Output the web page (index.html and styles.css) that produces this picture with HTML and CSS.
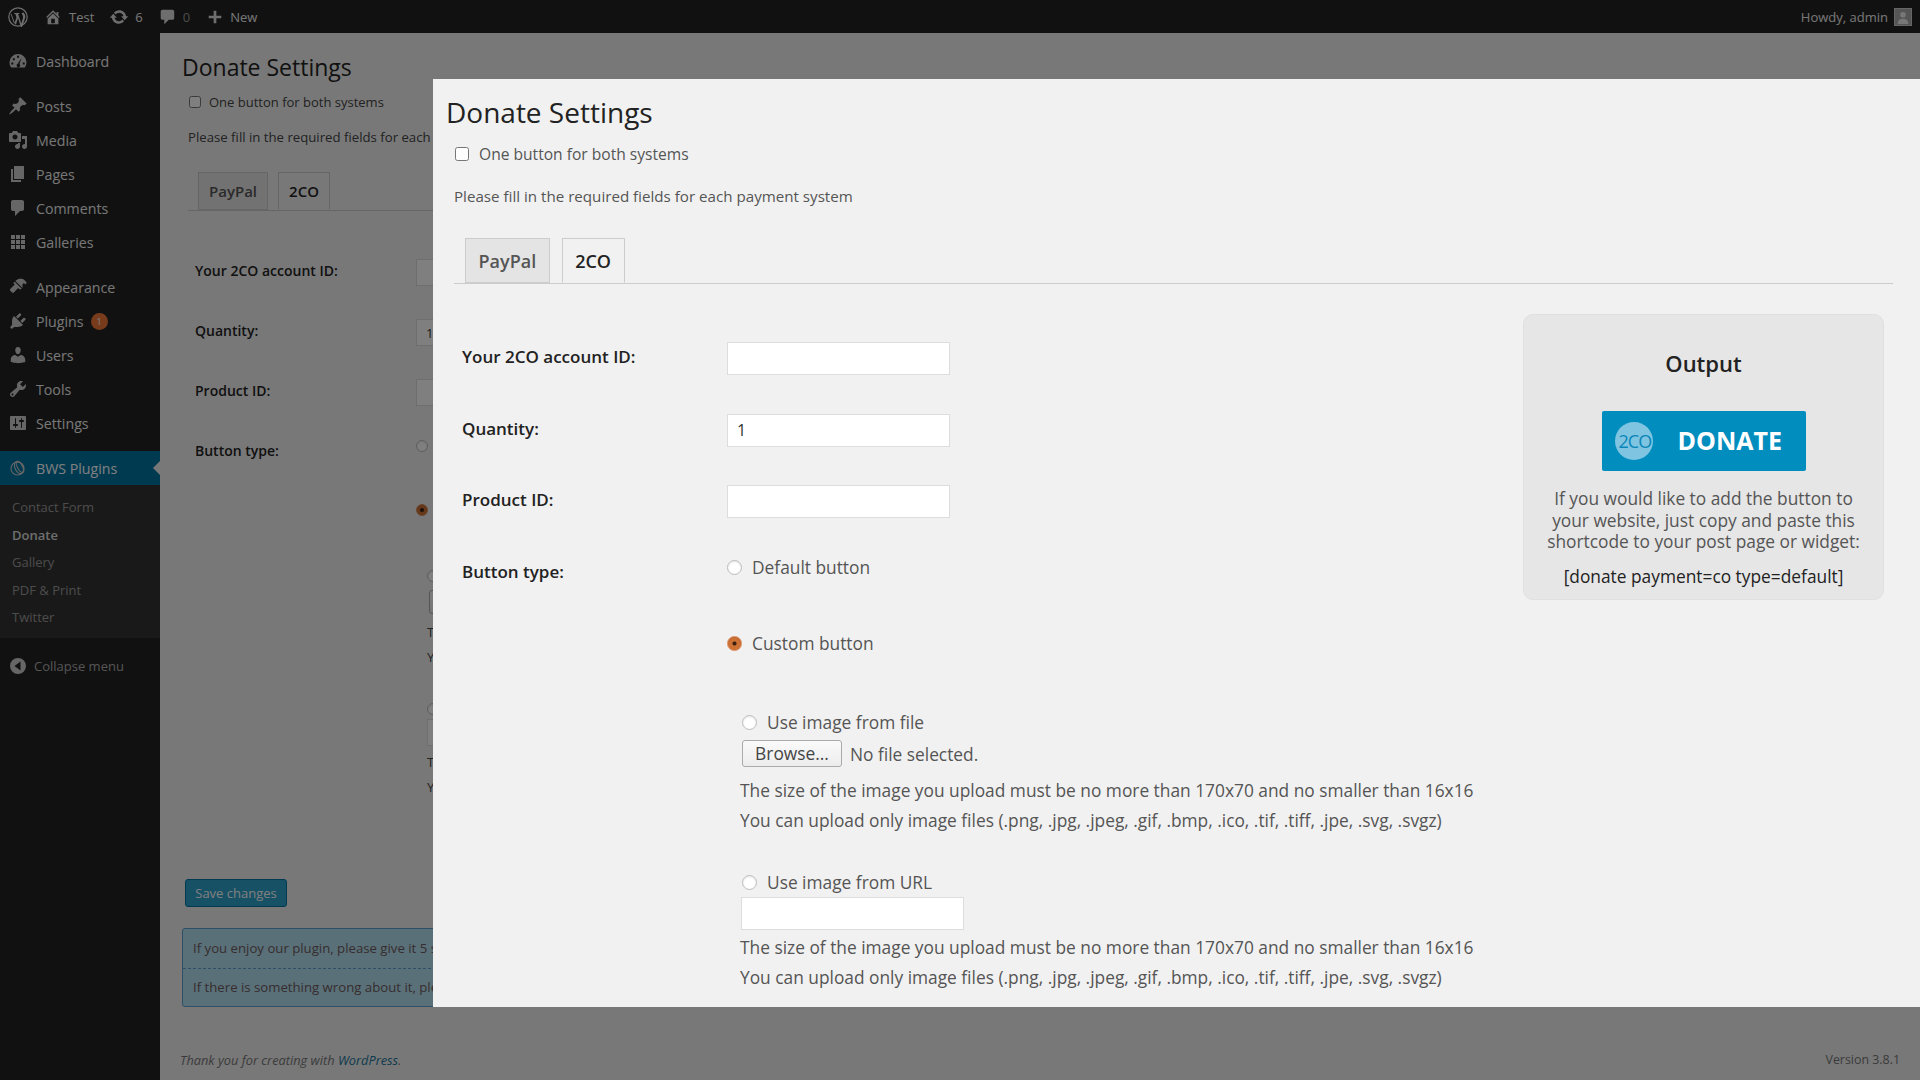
FILE: index.html
```html
<!DOCTYPE html>
<html>
<head>
    <meta charset="utf-8">
    <title>Donate Settings</title>
    <link rel="stylesheet" href="styles.css">
</head>
<body>
    <!-- Admin bar -->
    <div class="adminbar">
        <div class="bar-left">
            <svg class="bar-logo" viewBox="0 0 20 20"><circle cx="10" cy="10" r="9.2" fill="none"/><path d="M2.6 7l3.6 10 2.3-6.6L7.4 7H6.3V6h5v1h-1.2l3.2 9.6 1.6-5.4c.5-1.8-.2-3.1-1-4.2h-.4a2 2 0 0 1 2-1.6c1.2 1.2 2 3 1.8 4.5-.1 1-2.8 9.1-3.6 10.7h-.6L10 10.9 8 17.6h-.6L3.5 7H2.6z"/></svg>
            <span class="bar-item bar-site">
                <svg class="bar-icon" viewBox="0 0 20 20"><path d="M16 8.5l1.53 1.53-1.06 1.06L10 4.62l-6.47 6.47-1.06-1.06L10 2.5l4 4v-2h2v4zm-6-2.46l6 5.99V18H4v-5.97zM12 17v-5H8v5h4z"/></svg>
                Test
            </span>
            <span class="bar-item bar-updates">
                <svg class="bar-icon bar-icon-wide" viewBox="0 0 20 20"><path d="M10.2 3.28c3.53 0 6.43 2.61 6.92 6h2.08l-3.5 4-3.5-4h2.32c-.45-1.97-2.21-3.44-4.32-3.44-1.45 0-2.73.71-3.54 1.78L4.95 5.66C6.23 4.2 8.11 3.28 10.2 3.28zm-.4 13.44c-3.52 0-6.43-2.61-6.92-6H.8l3.5-4c1.17 1.33 2.33 2.67 3.5 4H5.48c.45 1.97 2.21 3.44 4.32 3.44 1.45 0 2.73-.71 3.54-1.78l1.71 1.95c-1.28 1.46-3.15 2.39-5.25 2.39z"/></svg>
                6
            </span>
            <span class="bar-item bar-comments">
                <svg class="bar-icon" viewBox="0 0 20 20"><path d="M5 2h11c1.1 0 2 .9 2 2v7c0 1.1-.9 2-2 2h-4l-5 5v-5H5c-1.1 0-2-.9-2-2V4c0-1.1.9-2 2-2z"/></svg>
                <span class="bar-zero">0</span>
            </span>
            <span class="bar-item bar-new">
                <svg class="bar-icon" viewBox="0 0 20 20"><path d="M8.5 3h3v5.5H17v3h-5.5V17h-3v-5.5H3v-3h5.5z"/></svg>
                New
            </span>
        </div>
        <div class="bar-right">
            <span>Howdy, admin</span>
            <span class="avatar">
                <svg viewBox="0 0 18 18"><circle cx="9" cy="6.5" r="3.2"/><path d="M3 17c0-4 2-6 6-6s6 2 6 6z"/></svg>
            </span>
        </div>
    </div>

    <div class="wrap">
        <!-- Sidebar -->
        <div class="sidebar">
            <ul class="menu">
                <li>
                    <svg class="menu-icon" viewBox="0 0 20 20"><path d="M10 3a8.5 8.5 0 0 0-8.5 8.5c0 1.9.6 3.6 1.7 5h13.6a8.5 8.5 0 0 0 1.7-5A8.5 8.5 0 0 0 10 3zM9 4.8h2v2H9zM4.8 7.3h2v2h-2zM3.3 11.5h2v2h-2zM14.7 11.5h2v2h-2zM13.5 7l-2 6a1.8 1.8 0 1 1-1.8-.2z" fill-rule="evenodd"/></svg>
                    Dashboard
                </li>
                <li class="first">
                    <svg class="menu-icon" viewBox="0 0 20 20"><path d="M10.44 3.02l1.82-1.82 6.36 6.35-1.83 1.82c-1.05-.68-2.48-.57-3.41.36l-.75.75c-.92.93-1.04 2.35-.35 3.41l-1.83 1.82-2.41-2.41-2.8 2.79c-.42.42-3.38 2.71-3.8 2.29s1.86-3.39 2.28-3.81l2.79-2.79L4.1 9.36l1.83-1.82c1.05.69 2.48.57 3.4-.36l.75-.75c.93-.92 1.05-2.35.36-3.41z"/></svg>
                    Posts
                </li>
                <li>
                    <svg class="menu-icon" viewBox="0 0 20 20"><path d="M13 11V4c0-.55-.45-1-1-1h-1.67L9 1H5L3.67 3H2c-.55 0-1 .45-1 1v7c0 .55.45 1 1 1h10c.55 0 1-.45 1-1zM7 4.5c1.38 0 2.5 1.12 2.5 2.5S8.38 9.5 7 9.5 4.5 8.38 4.5 7 5.62 4.5 7 4.5zM14 6h5v10.5c0 1.38-1.12 2.5-2.5 2.5S14 17.88 14 16.5s1.12-2.5 2.5-2.5c.17 0 .34.02.5.05V9h-3V6zm-4 8.05V13h2v3.5c0 1.38-1.12 2.5-2.5 2.5S7 17.88 7 16.5 8.12 14 9.5 14c.17 0 .34.02.5.05z"/></svg>
                    Media
                </li>
                <li>
                    <svg class="menu-icon" viewBox="0 0 20 20"><path d="M6 15V2h10v13H6zm-1 1h8v2H3V5h2v11z"/></svg>
                    Pages
                </li>
                <li>
                    <svg class="menu-icon" viewBox="0 0 20 20"><path d="M5 2h9c1.1 0 2 .9 2 2v7c0 1.1-.9 2-2 2h-2l-5 5v-5H5c-1.1 0-2-.9-2-2V4c0-1.1.9-2 2-2z"/></svg>
                    Comments
                </li>
                <li>
                    <svg class="menu-icon" viewBox="0 0 20 20"><path d="M3 3h4v4H3zM8 3h4v4H8zM13 3h4v4h-4zM3 8h4v4H3zM8 8h4v4H8zM13 8h4v4h-4zM3 13h4v4H3zM8 13h4v4H8zM13 13h4v4h-4z"/></svg>
                    Galleries
                </li>
                <li class="first">
                    <svg class="menu-icon" viewBox="0 0 20 20"><path d="M14.48 11.06L7.41 3.97s.7-.7 2.12-1.41c1.42-.7 2.83-.7 4.24-.7 1.42 0 2.83 1.4 2.83 1.4l2.12 2.12c-.71 1.42-1.42 2.13-1.42 2.13l-1.41-1.42-1.41 1.42zM13.77 11.77L6.7 4.7 5.28 6.12 6.7 7.53l-4.24 4.24c-.7.71-.7 1.42 0 2.12l1.4 1.4c.7.7 1.41.7 2.12 0l4.24-4.24 1.41 1.41z"/></svg>
                    Appearance
                </li>
                <li>
                    <svg class="menu-icon" viewBox="0 0 20 20"><path d="M13.11 4.36L9.87 7.6 8 5.73l3.24-3.24c.35-.34 1.05-.2 1.56.32.52.51.66 1.21.31 1.55zm-8 1.77l.91-1.12 9.01 9.01-1.19.84c-.71.71-2.63 1.16-3.82 1.16H6.14L4.9 17.26c-.59.59-1.54.59-2.12 0-.59-.58-.59-1.53 0-2.12l1.24-1.24v-3.88c0-1.13.4-3.05 1.09-3.89zm7.26 3.97l3.24-3.24c.34-.35 1.04-.21 1.55.31.52.51.66 1.21.31 1.55l-3.24 3.25z"/></svg>
                    Plugins
                    <span class="badge">1</span>
                </li>
                <li>
                    <svg class="menu-icon" viewBox="0 0 20 20"><path d="M10 9.25c-2.27 0-2.73-3.44-2.73-3.44C7 4.02 7.82 2 9.97 2c2.16 0 2.98 2.02 2.71 3.81 0 0-.41 3.44-2.68 3.44zm0 2.57L12.72 10c2.39 0 4.52 2.33 4.52 4.53v2.49s-3.65 1.13-7.24 1.13c-3.65 0-7.24-1.13-7.24-1.13v-2.49c0-2.25 1.94-4.48 4.47-4.48z"/></svg>
                    Users
                </li>
                <li>
                    <svg class="menu-icon" viewBox="0 0 20 20"><path d="M16.68 9.77c-1.34 1.34-3.3 1.67-4.95.99l-5.41 6.52c-.99.99-2.59.99-3.57 0-.99-.98-.99-2.58 0-3.57l6.52-5.42c-.68-1.65-.35-3.61.99-4.95 1.28-1.28 3.12-1.62 4.72-1.06l-2.89 2.89 2.82 2.82 2.86-2.87c.53 1.58.18 3.4-1.09 4.65zM3.81 16.21c.4.39 1.04.39 1.43 0 .4-.4.4-1.04 0-1.43-.39-.4-1.03-.4-1.43 0-.39.39-.39 1.03 0 1.43z"/></svg>
                    Tools
                </li>
                <li>
                    <svg class="menu-icon" viewBox="0 0 20 20"><path d="M18 16V4c0-.55-.45-1-1-1H3c-.55 0-1 .45-1 1v12c0 .55.45 1 1 1h14c.55 0 1-.45 1-1zM8 11h1c.55 0 1 .45 1 1s-.45 1-1 1H8v1.5c0 .28-.22.5-.5.5s-.5-.22-.5-.5V13H6c-.55 0-1-.45-1-1s.45-1 1-1h1V5.5c0-.28.22-.5.5-.5s.5.22.5.5V11zm5-2h-1c-.55 0-1-.45-1-1s.45-1 1-1h1V5.5c0-.28.22-.5.5-.5s.5.22.5.5V7h1c.55 0 1 .45 1 1s-.45 1-1 1h-1v5.5c0 .28-.22.5-.5.5s-.5-.22-.5-.5V9z"/></svg>
                    Settings
                </li>
                <li class="first current">
                    <svg class="menu-icon menu-icon-line" viewBox="0 0 20 20"><circle cx="9.5" cy="10.5" r="6.5"/><ellipse cx="11" cy="9.5" rx="4" ry="6.5" transform="rotate(-25 11 9.5)"/><ellipse cx="12" cy="9" rx="2.5" ry="6" transform="rotate(-30 12 9)"/></svg>
                    BWS Plugins
                </li>
            </ul>
            <ul class="submenu">
                <li>Contact Form</li>
                <li class="sub-current">Donate</li>
                <li>Gallery</li>
                <li>PDF &amp; Print</li>
                <li>Twitter</li>
            </ul>
            <div class="collapse">
                <svg class="menu-icon" viewBox="0 0 20 20"><path d="M10 2a8 8 0 1 1 0 16 8 8 0 0 1 0-16zM12.5 5.5L6.5 10l6 4.5z" fill-rule="evenodd"/></svg>
                Collapse menu
            </div>
        </div>

        <!-- Page behind the popup -->
        <div class="content">
            <div class="settings settings-page">
                <h2>Donate Settings</h2>
                <label class="check-line"><input type="checkbox"> One button for both systems</label>
                <p class="intro">Please fill in the required fields for each payment system</p>
                <div class="tabs">
                    <span class="tab">PayPal</span>
                    <span class="tab tab-active">2CO</span>
                </div>
                <div class="columns">
                    <div class="fields">
                        <div class="row">
                            <div class="row-label">Your 2CO account ID:</div>
                            <input class="text-input" type="text">
                        </div>
                        <div class="row">
                            <div class="row-label">Quantity:</div>
                            <input class="text-input" type="text" value="1">
                        </div>
                        <div class="row">
                            <div class="row-label">Product ID:</div>
                            <input class="text-input" type="text">
                        </div>
                        <div class="row row-type">
                            <div class="row-label">Button type:</div>
                            <div class="type-options">
                                <label class="radio-line"><input type="radio" name="bg-type"> Default button</label>
                                <label class="radio-line radio-custom"><input type="radio" name="bg-type" checked> Custom button</label>
                                <div class="custom-block">
                                    <label class="radio-line"><input type="radio" name="bg-src"> Use image from file</label>
                                    <div class="file-line"><span class="browse">Browse...</span> No file selected.</div>
                                    <p class="hint">The size of the image you upload must be no more than 170x70 and no smaller than 16x16</p>
                                    <p class="hint">You can upload only image files (.png, .jpg, .jpeg, .gif, .bmp, .ico, .tif, .tiff, .jpe, .svg, .svgz)</p>
                                    <label class="radio-line radio-url"><input type="radio" name="bg-src"> Use image from URL</label>
                                    <input class="text-input url-input" type="text">
                                    <p class="hint">The size of the image you upload must be no more than 170x70 and no smaller than 16x16</p>
                                    <p class="hint">You can upload only image files (.png, .jpg, .jpeg, .gif, .bmp, .ico, .tif, .tiff, .jpe, .svg, .svgz)</p>
                                </div>
                            </div>
                        </div>
                    </div>
                </div>
                <button class="save">Save changes</button>
                <div class="notice">
                    <div class="notice-row">If you enjoy our plugin, please give it 5 stars on WordPress</div>
                    <div class="notice-row">If there is something wrong about it, please contact us</div>
                </div>
            </div>
            <div class="footer">
                <span class="thanks">Thank you for creating with <a href="#">WordPress</a>.</span>
                <span class="version">Version 3.8.1</span>
            </div>
        </div>
    </div>

    <div class="overlay"></div>

    <!-- Popup -->
    <div class="modal">
        <div class="settings settings-modal">
            <h2>Donate Settings</h2>
            <label class="check-line"><input type="checkbox"> One button for both systems</label>
            <p class="intro">Please fill in the required fields for each payment system</p>
            <div class="tabs">
                <span class="tab">PayPal</span>
                <span class="tab tab-active">2CO</span>
            </div>
            <div class="columns">
                <div class="fields">
                    <div class="row">
                        <div class="row-label">Your 2CO account ID:</div>
                        <input class="text-input" type="text">
                    </div>
                    <div class="row">
                        <div class="row-label">Quantity:</div>
                        <input class="text-input" type="text" value="1">
                    </div>
                    <div class="row">
                        <div class="row-label">Product ID:</div>
                        <input class="text-input" type="text">
                    </div>
                    <div class="row row-type">
                        <div class="row-label">Button type:</div>
                        <div class="type-options">
                            <label class="radio-line"><input type="radio" name="type"> Default button</label>
                            <label class="radio-line radio-custom"><input type="radio" name="type" checked> Custom button</label>
                            <div class="custom-block">
                                <label class="radio-line"><input type="radio" name="src"> Use image from file</label>
                                <div class="file-line"><span class="browse">Browse...</span> No file selected.</div>
                                <p class="hint">The size of the image you upload must be no more than 170x70 and no smaller than 16x16</p>
                                <p class="hint">You can upload only image files (.png, .jpg, .jpeg, .gif, .bmp, .ico, .tif, .tiff, .jpe, .svg, .svgz)</p>
                                <label class="radio-line radio-url"><input type="radio" name="src"> Use image from URL</label>
                                <input class="text-input url-input" type="text">
                                <p class="hint">The size of the image you upload must be no more than 170x70 and no smaller than 16x16</p>
                                <p class="hint">You can upload only image files (.png, .jpg, .jpeg, .gif, .bmp, .ico, .tif, .tiff, .jpe, .svg, .svgz)</p>
                            </div>
                        </div>
                    </div>
                </div>
                <div class="output">
                    <h3>Output</h3>
                    <div class="donate-btn">
                        <span class="donate-logo">2CO</span>
                        <span class="donate-word">DONATE</span>
                    </div>
                    <p>If you would like to add the button to your website, just copy and paste this shortcode to your post page or widget:</p>
                    <div class="shortcode">[donate payment=co type=default]</div>
                </div>
            </div>
        </div>
    </div>
</body>
</html>
```

FILE: styles.css
```css
* {
    box-sizing: border-box;
}

html, body {
    margin: 0;
    height: 1080px;
    overflow: hidden;
}

body {
    position: relative;
    background: #f1f1f1;
    font-family: "Open Sans", sans-serif;
    font-size: 13px;
    color: #444;
}

ul {
    list-style: none;
    margin: 0;
    padding: 0;
}

/* Admin bar */
.adminbar {
    height: 33px;
    background: #222;
    color: #eee;
    display: flex;
    justify-content: space-between;
    align-items: center;
    padding: 0 8px;
}

.bar-left, .bar-right, .bar-item {
    display: flex;
    align-items: center;
}

.bar-logo {
    width: 20px;
    height: 20px;
    fill: #ddd;
    stroke: none;
}

.bar-logo circle {
    stroke: #ddd;
    stroke-width: 1.2;
}

.bar-icon {
    width: 18px;
    height: 18px;
    fill: #ddd;
    margin-right: 7px;
}

.bar-site {
    margin-left: 16px;
}

.bar-updates {
    margin-left: 15px;
}

.bar-icon-wide {
    width: 20px;
    height: 20px;
    margin-right: 6px;
}

.bar-comments {
    margin-left: 15px;
}

.bar-zero {
    color: #999;
}

.bar-new {
    margin-left: 16px;
}

.bar-new .bar-icon {
    margin-right: 6px;
}

.bar-right {
    gap: 6px;
}

.avatar {
    display: block;
    width: 18px;
    height: 18px;
    background: #aaa;
    border: 1px solid #ccc;
}

.avatar svg {
    display: block;
    width: 100%;
    height: 100%;
    fill: #eee;
}

/* Layout */
.wrap {
    display: flex;
    height: 1047px;
}

.sidebar {
    width: 160px;
    flex-shrink: 0;
    background: #222;
    color: #eee;
    padding-top: 11px;
}

.content {
    flex: 1;
    position: relative;
}

/* Sidebar menu */
.menu li {
    height: 34px;
    display: flex;
    align-items: center;
    padding-left: 8px;
    font-size: 14.2px;
    position: relative;
}

.menu li.first {
    margin-top: 11px;
}

.menu-icon {
    width: 20px;
    height: 20px;
    fill: #ccc;
    margin-right: 8px;
    flex-shrink: 0;
}

.menu-icon-line {
    fill: none;
    stroke: #ccc;
    stroke-width: 1.1;
}

.badge {
    width: 17px;
    height: 17px;
    border-radius: 50%;
    background: #f0783a;
    color: #fff;
    font-size: 9px;
    line-height: 17px;
    text-align: center;
    margin-left: 7px;
}

.menu li.current {
    background: #0074a2;
    color: #fff;
}

.menu li.current::after {
    content: "";
    position: absolute;
    right: 0;
    top: 10px;
    border: 7px solid transparent;
    border-left-width: 0;
    border-right-color: #f1f1f1;
}

.submenu {
    background: #333;
    padding: 9px 0 6px 12px;
    color: #999;
}

.submenu li {
    height: 27.5px;
    line-height: 27.5px;
}

.submenu .sub-current {
    color: #ddd;
    font-weight: 600;
}

.collapse {
    display: flex;
    align-items: center;
    padding: 18px 0 0 8px;
    color: #aaa;
}

.collapse .menu-icon {
    margin-right: 6px;
}

/* Settings form, page version */
.settings h2 {
    font-weight: 400;
    color: #222;
}

.settings label {
    display: flex;
    align-items: center;
}

.settings p {
    margin: 0;
}

.settings-page {
    padding: 18px 0 0 22px;
    height: 990px;
}

.settings-page h2 {
    font-size: 23px;
    line-height: 32px;
    margin: 0;
}

.settings-page .check-line {
    margin: 9px 0 0 7px;
    height: 20px;
}

.settings-page .check-line input {
    width: 12px;
    height: 12px;
    margin: 0 8px 0 0;
}

.settings-page .intro {
    margin: 15px 0 0 6px;
    line-height: 20px;
    font-size: 13.2px;
}

.settings-page .tabs {
    margin: 26px 0 0 6px;
    padding-left: 10px;
    height: 38px;
}

.settings-page .tab {
    font-size: 15px;
    padding: 0 10px;
    height: 38px;
    line-height: 36px;
    margin-right: 10px;
}

.settings-page .fields {
    padding: 48px 0 0 13px;
}

.settings-page .row {
    height: 60px;
}

.settings-page .row-label {
    width: 221px;
    flex-shrink: 0;
    font-size: 14px;
    padding-top: 2px;
}

.settings-page .text-input {
    width: 186px;
    height: 27px;
    font-size: 13px;
    flex-shrink: 0;
}

.settings-page .row-type {
    height: 440px;
}

.settings-page .type-options {
    margin-top: -3px;
}

.settings-page .radio-line {
    height: 20px;
}

.settings-page .radio-line input {
    width: 12px;
    height: 12px;
    margin-right: 8px;
}

.settings-page .radio-custom {
    margin-top: 44px;
}

.settings-page .custom-block {
    padding: 46px 0 0 11px;
}

.settings-page .file-line {
    margin-top: 4px;
    height: 24px;
}

.settings-page .browse {
    font-size: 13px;
    padding: 2px 8px;
    margin: 0 8px 0 2px;
}

.settings-page .hint {
    line-height: 25px;
}

.settings-page .file-line + .hint {
    margin-top: 6px;
}

.settings-page .radio-url {
    margin-top: 29px;
}

.settings-page .url-input {
    margin-bottom: 4px;
}

.save {
    position: absolute;
    left: 25px;
    top: 846px;
    width: 102px;
    height: 28px;
    background: #2ea2cc;
    border: 1px solid #0074a2;
    border-radius: 3px;
    color: #fff;
    font-family: inherit;
    font-size: 13px;
    padding: 0;
}

.notice {
    position: absolute;
    left: 22px;
    top: 895px;
    width: 700px;
    background: #b4e0f0;
    border: 1px solid #5a9fd0;
    border-radius: 3px;
    color: #6e5a5e;
    font-size: 13.2px;
}

.notice-row {
    height: 39px;
    line-height: 38px;
    padding-left: 10px;
}

.notice-row + .notice-row {
    height: 38px;
    line-height: 37px;
    border-top: 1px dashed #5a9fd0;
}

.footer {
    position: absolute;
    left: 0;
    right: 0;
    top: 1018px;
    display: flex;
    justify-content: space-between;
    padding: 0 20px;
    font-size: 12.8px;
    color: #777;
}

.thanks {
    font-style: italic;
}

.version {
    font-size: 12.4px;
}

.footer a {
    color: #21759b;
    text-decoration: none;
}

/* Overlay and popup */
.overlay {
    position: absolute;
    inset: 0;
    background: rgba(0, 0, 0, 0.5);
}

.modal {
    position: absolute;
    left: 433px;
    top: 79px;
    width: 1487px;
    height: 928px;
    background: #f1f1f1;
    overflow: hidden;
}

.settings-modal {
    padding: 16px 27px 0 13px;
    color: #555;
}

.settings-modal h2 {
    font-size: 28px;
    line-height: 34px;
    margin: 0;
}

.settings-modal .check-line {
    margin: 15px 0 0 9px;
    height: 20px;
    font-size: 15.6px;
}

.settings-modal .check-line input {
    width: 14px;
    height: 14px;
    margin: 0 10px 0 0;
}

.settings-modal .intro {
    margin: 22px 0 0 8px;
    line-height: 20px;
    font-size: 15.15px;
}

.tabs {
    display: flex;
    align-items: flex-end;
    border-bottom: 1px solid #ccc;
}

.settings-modal .tabs {
    margin: 33px 0 0 8px;
    padding-left: 11px;
    height: 45px;
}

.tab {
    display: block;
    background: #e4e4e4;
    border: 1px solid #ccc;
    color: #555;
    font-weight: 600;
}

.settings-modal .tab {
    font-size: 18px;
    height: 45px;
    line-height: 45px;
    padding: 0 12.5px;
    margin-right: 12px;
}

.settings .tab-active {
    background: #f1f1f1;
    color: #222;
    border-bottom-color: #f1f1f1;
}

.columns {
    display: flex;
    justify-content: space-between;
}

.settings-modal .fields {
    padding: 58px 0 0 16px;
}

.row {
    display: flex;
    align-items: flex-start;
}

.settings-modal .row {
    height: 71.7px;
}

.settings-modal .row-type {
    height: auto;
}

.row-label {
    font-weight: 600;
    color: #222;
}

.settings-modal .row-label {
    width: 265px;
    font-size: 17px;
    padding-top: 3px;
}

.text-input {
    display: block;
    background: #fff;
    border: 1px solid #ddd;
    font-family: inherit;
    color: #333;
    padding: 0 9px;
    margin: 0;
    outline: none;
}

.settings-modal .text-input {
    width: 223px;
    height: 33px;
    font-size: 16px;
}

.settings-modal .type-options {
    margin-top: 0;
    font-size: 17.33px;
}

.radio-line input {
    appearance: none;
    border: 1px solid #bbb;
    border-radius: 50%;
    background: #fff;
    box-shadow: inset 0 1px 2px rgba(0, 0, 0, 0.1);
    flex-shrink: 0;
    margin: 0;
}

.radio-line input:checked {
    background: radial-gradient(circle, #3a2010 0 1.5px, #cf7236 2.5px);
    border-color: #d9895a;
}

.settings-modal .radio-line {
    height: 20px;
}

.settings-modal .radio-line input {
    width: 15px;
    height: 15px;
    margin-right: 10px;
}

.settings-modal .radio-custom {
    margin-top: 56px;
}

.settings-modal .custom-block {
    padding: 59px 0 0 13px;
}

.settings-modal .custom-block .radio-line input {
    margin-left: 2px;
}

.file-line {
    display: flex;
    align-items: center;
}

.settings-modal .file-line {
    margin-top: 8px;
    height: 27px;
    gap: 8px;
}

.browse {
    display: block;
    border: 1px solid #aaa;
    border-radius: 3px;
    background: linear-gradient(#fafafa, #ececec);
    color: #444;
}

.settings-modal .browse {
    width: 100px;
    height: 27px;
    line-height: 25px;
    text-align: center;
    margin-left: 2px;
}

.settings-modal .hint {
    line-height: 30px;
}

.settings-modal .file-line + .hint {
    margin-top: 8px;
}

.settings-modal .radio-url {
    margin-top: 37px;
}

.settings-modal .url-input {
    margin: 5px 0 2px 1px;
    height: 33px;
}

/* Output box */
.output {
    width: 361px;
    height: 286px;
    margin: 30px 9px 0 0;
    background: #e6e6e6;
    border: 1px solid #e0e0e0;
    border-radius: 10px;
    text-align: center;
    padding-top: 35px;
    font-size: 17.33px;
}

.output h3 {
    margin: 0;
    font-size: 22px;
    line-height: 26px;
    font-weight: 600;
    color: #222;
}

.donate-btn {
    width: 204px;
    height: 60px;
    margin: 35px auto 0;
    background: #028dbf;
    border-radius: 2px;
    display: flex;
    align-items: center;
    color: #fff;
    padding-left: 13px;
}

.donate-logo {
    width: 38px;
    height: 38px;
    border-radius: 50%;
    background: #7fc5e2;
    color: #0a86b8;
    font-size: 18px;
    line-height: 38px;
    letter-spacing: -1px;
    padding-left: 4px;
    text-align: left;
    white-space: nowrap;
}

.donate-word {
    margin-left: 25px;
    padding-bottom: 3px;
    font-size: 25px;
    font-weight: 700;
}

.output p {
    margin: 17px 16px 0;
    line-height: 21.5px;
    color: #555;
}

.shortcode {
    margin-top: 12px;
    color: #222;
    line-height: 22px;
}
```
